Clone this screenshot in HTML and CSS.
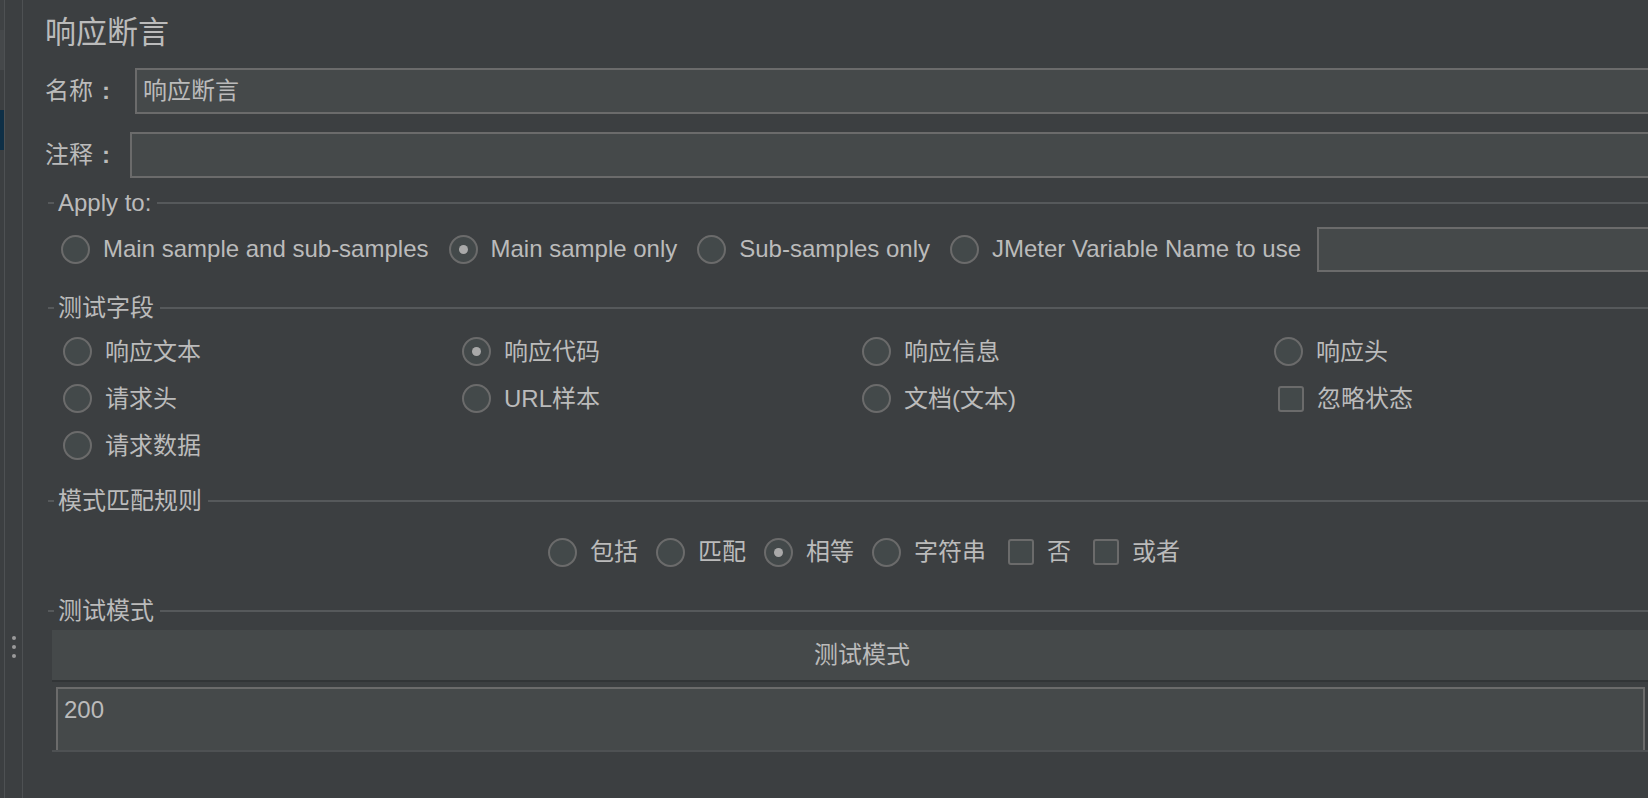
FILE: index.html
```html
<!DOCTYPE html>
<html lang="zh-CN">
<head>
<meta charset="utf-8">
<title>响应断言</title>
<link rel="stylesheet" href="styles.css">
</head>
<body>
<div class="app">
  <aside class="rail">
    <div class="rail-strip">
      <span class="strip-a"></span>
      <span class="strip-b"></span>
      <span class="strip-c"></span>
      <span class="strip-sel"></span>
    </div>
    <div class="rail-body">
      <div class="grip"><i></i><i></i><i></i></div>
    </div>
  </aside>
  <main class="panel">
    <h1 class="title">响应断言</h1>
    <div class="field name-field">
      <label class="field-label">名称<span class="colon">:</span></label>
      <div class="text-input">响应断言</div>
    </div>
    <div class="field comment-field">
      <label class="field-label">注释<span class="colon">:</span></label>
      <div class="text-input"></div>
    </div>

    <section class="group apply-group">
      <div class="legend"><span>Apply to:</span></div>
      <div class="apply-row">
        <label class="opt"><span class="radio"></span>Main sample and sub-samples</label>
        <label class="opt"><span class="radio checked"></span>Main sample only</label>
        <label class="opt"><span class="radio"></span>Sub-samples only</label>
        <label class="opt"><span class="radio"></span>JMeter Variable Name to use</label>
        <div class="text-input var-input"></div>
      </div>
    </section>

    <section class="group field-group">
      <div class="legend"><span>测试字段</span></div>
      <div class="field-grid">
        <label class="opt"><span class="radio"></span>响应文本</label>
        <label class="opt"><span class="radio checked"></span>响应代码</label>
        <label class="opt"><span class="radio"></span>响应信息</label>
        <label class="opt"><span class="radio"></span>响应头</label>
        <label class="opt"><span class="radio"></span>请求头</label>
        <label class="opt"><span class="radio"></span>URL样本</label>
        <label class="opt"><span class="radio"></span>文档(文本)</label>
        <label class="opt"><span class="checkbox"></span>忽略状态</label>
        <label class="opt"><span class="radio"></span>请求数据</label>
      </div>
    </section>

    <section class="group rule-group">
      <div class="legend"><span>模式匹配规则</span></div>
      <div class="rule-row">
        <label class="opt"><span class="radio"></span>包括</label>
        <label class="opt"><span class="radio"></span>匹配</label>
        <label class="opt"><span class="radio checked"></span>相等</label>
        <label class="opt"><span class="radio"></span>字符串</label>
        <label class="opt"><span class="checkbox"></span>否</label>
        <label class="opt"><span class="checkbox"></span>或者</label>
      </div>
    </section>

    <section class="group pattern-group">
      <div class="legend"><span>测试模式</span></div>
      <div class="table">
        <div class="table-head">测试模式</div>
        <div class="table-body">
          <div class="cell">200</div>
        </div>
      </div>
    </section>
  </main>
</div>
</body>
</html>
```

FILE: styles.css
```css
html, body {
  margin: 0;
  padding: 0;
  height: 100%;
  overflow: hidden;
  background: #3c3f41;
}

body {
  font-family: "Liberation Sans", "Noto Sans CJK SC", sans-serif;
  font-size: 24px;
  line-height: 26px;
  color: #bbbbbb;
}

.app {
  display: flex;
  height: 798px;
}

/* left rail */
.rail {
  display: flex;
  flex: none;
}

.rail-strip {
  width: 4px;
  display: flex;
  flex-direction: column;
  border-right: 1px solid #4e5153;
}

.strip-a { height: 30px; background: #3f4244; }
.strip-b { height: 40px; background: #45484a; }
.strip-c { height: 40px; background: #3c3f41; }
.strip-sel { height: 40px; background: #0e2f46; }

.rail-body {
  width: 17px;
  border-right: 1px solid #4e5153;
  display: flex;
  flex-direction: column;
  align-items: center;
}

.grip {
  margin-top: 636px;
  display: flex;
  flex-direction: column;
  gap: 5px;
}

.grip i {
  display: block;
  width: 4px;
  height: 4px;
  border-radius: 50%;
  background: #9a9a9a;
}

/* main panel */
.panel {
  flex: 1;
  margin-right: -32px;
  padding-left: 22px;
  display: flex;
  flex-direction: column;
}

.title {
  margin: 0;
  padding-top: 3px;
  height: 57px;
  font-size: 31px;
  line-height: 60px;
  font-weight: normal;
  color: #bbbbbb;
}

.field {
  display: flex;
  align-items: center;
}

.name-field { margin-top: 8px; }
.comment-field { margin-top: 18px; }

.field-label {
  flex: none;
  width: 72px;
  white-space: nowrap;
}

.colon {
  margin-left: 9px;
  font-weight: bold;
}

.name-field .field-label { margin-right: 18px; }
.comment-field .field-label { margin-right: 13px; }

.text-input {
  flex: 1;
  box-sizing: border-box;
  height: 46px;
  border: 2px solid #6b6b6b;
  background: #45494a;
  padding: 0 6px;
  display: flex;
  align-items: center;
  color: #bbbbbb;
}

/* titled groups */
.group {
  margin-left: 3px;
  display: flex;
  flex-direction: column;
}

.legend {
  display: flex;
  align-items: center;
  height: 26px;
  gap: 4px;
}

.legend::before {
  content: "";
  width: 6px;
  height: 2px;
  background: #56595b;
}

.legend::after {
  content: "";
  flex: 1;
  height: 2px;
  margin-left: 2px;
  background: #56595b;
}

.apply-group { margin-top: 12px; }
.field-group { margin-top: 23px; }
.rule-group { margin-top: 19px; }
.pattern-group { margin-top: 23px; }

.opt {
  display: flex;
  align-items: center;
  gap: 13px;
  white-space: nowrap;
}

.radio {
  flex: none;
  box-sizing: border-box;
  width: 29px;
  height: 29px;
  border-radius: 50%;
  border: 2px solid #6b6b6b;
  background: #43494a;
  display: flex;
  align-items: center;
  justify-content: center;
}

.radio.checked::after {
  content: "";
  width: 9px;
  height: 9px;
  border-radius: 50%;
  background: #a9a9a9;
}

.checkbox {
  flex: none;
  box-sizing: border-box;
  width: 26px;
  height: 26px;
  margin-left: 4px;
  border-radius: 3px;
  border: 2px solid #6b6b6b;
  background: #43494a;
}

.apply-row {
  margin-top: 10px;
  height: 46px;
  display: flex;
  align-items: center;
  gap: 20px;
  padding-left: 13px;
}

.var-input {
  margin-left: -4px;
  height: 45px;
}

.field-grid {
  margin-top: 7px;
  padding-left: 15px;
  display: grid;
  grid-template-columns: 399px 400px 412px 1fr;
  grid-auto-rows: 47px;
  align-items: center;
}

.rule-row {
  margin-top: 15px;
  height: 46px;
  display: flex;
  align-items: center;
  justify-content: center;
  gap: 18px;
}

.table {
  margin-top: 6px;
  margin-left: 4px;
  display: flex;
  flex-direction: column;
}

.table-head {
  height: 50px;
  background: #45494a;
  border-bottom: 2px solid #323537;
  display: flex;
  align-items: center;
  justify-content: center;
  padding-right: 8px;
}

.table-body {
  padding: 5px 35px 0 4px;
  border-bottom: 2px solid #4e5153;
}

.cell {
  box-sizing: border-box;
  height: 63px;
  border: 2px solid #6b6b6b;
  border-bottom: none;
  background: #45494a;
  padding: 8px 6px 0;
}
```
